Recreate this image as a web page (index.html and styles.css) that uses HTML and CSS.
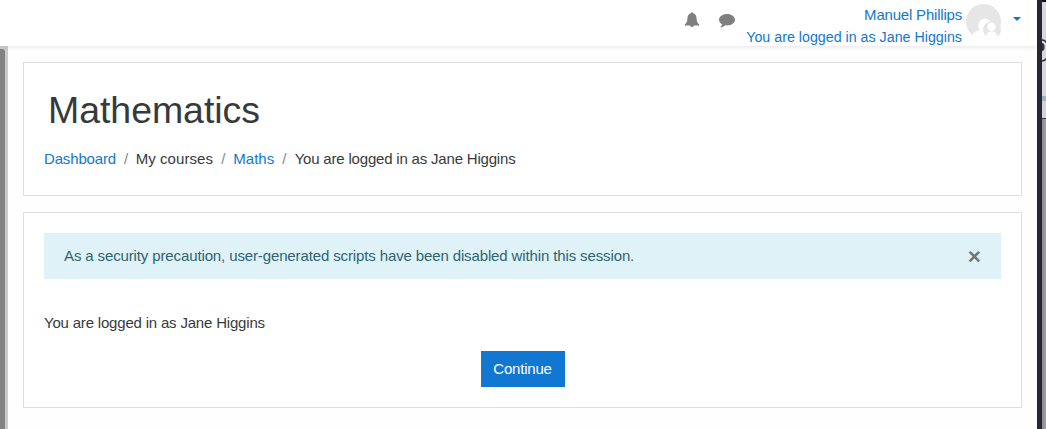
FILE: index.html
```html
<!DOCTYPE html>
<html lang="en">
<head>
<meta charset="utf-8">
<title>Mathematics</title>
<link rel="stylesheet" href="styles.css">
</head>
<body>
<div class="screen">
  <div class="window">
    <header class="navbar">
      <svg class="bell" viewBox="0 0 16 16" width="16" height="16"><path d="M8 0.2c.7 0 1 .4 1 1.100C11.300 1.800 12.400 3.600 12.500 6c.1 3.300.9 5 2.700 6.500v1.100H9.900A1.950 1.950 0 0 1 6.100 13.600H.8v-1.100C2.600 11 3.400 9.300 3.500 6 3.600 3.600 4.700 1.800 7 1.300c0-.7.3-1.100 1-1.100z"/></svg>
      <svg class="chat" viewBox="0 0 16 14" width="16" height="14"><path d="M8 0c4.400 0 8 2.600 8 5.700s-3.600 5.700-8 5.700c-.6 0-1.200 0-1.800-.1-1.200 1.100-2.600 1.900-4.400 2.100-.3 0-.5-.4-.2-.7.7-.7 1.200-1.300 1.500-2.500C1.200 9.200 0 7.600 0 5.700 0 2.600 3.600 0 8 0z"/></svg>
      <div class="user"><a class="name">Manuel Phillips</a><a class="role">You are logged in as Jane Higgins</a></div>
      <svg class="avatar" viewBox="0 0 35 35" width="35" height="35">
        <defs>
          <clipPath id="face"><circle cx="17.500" cy="17.500" r="17.500"/></clipPath>
          <clipPath id="small-face"><circle cx="26" cy="26" r="9"/></clipPath>
        </defs>
        <g clip-path="url(#face)"><rect width="35" height="35" fill="#e6e6e6"/><circle cx="19" cy="21.500" r="6.800" fill="#fff"/><path d="M5 35c.5-5 4-8.500 10-9h20v9z" fill="#fff"/></g>
        <g clip-path="url(#small-face)"><rect x="17" y="17" width="18" height="18" fill="#e6e6e6"/><circle cx="25.500" cy="22.800" r="4.200" fill="#fff"/><path d="M19.500 36c0-6 2-8.500 6-8.500s6.500 2.500 6.500 8.500z" fill="#fff"/></g>
      </svg>
      <span class="caret"></span>
    </header>
    <div class="body">
      <div class="scroll"><div class="thumb"></div></div>
      <main class="content">
        <section class="card heading">
          <h1>Mathematics</h1>
          <nav class="crumbs"><a class="dash">Dashboard</a><i>/</i><span>My courses</span><i>/</i><a>Maths</a><i>/</i><span class="tight">You are logged in as Jane Higgins</span></nav>
        </section>
        <section class="card notice">
          <div class="alert"><span>As a security precaution, user-generated scripts have been disabled within this session.</span><button class="close">×</button></div>
          <p class="tight">You are logged in as Jane Higgins</p>
          <button class="continue">Continue</button>
        </section>
      </main>
    </div>
  </div>
  <aside class="behind">
    <div class="behind-top"><svg width="5" height="94" viewBox="0 0 5 94"><path d="M0 38q3 0 5 3M0 59q3 0 5-3" stroke="#333" stroke-width="1.500" fill="none"/><ellipse cx="0" cy="45" rx="2.500" ry="4" fill="#333"/></svg></div>
    <div class="behind-bar"></div>
    <div class="behind-tool"></div>
    <div class="behind-low"></div>
  </aside>
</div>
</body>
</html>
```
FILE: styles.css
```css
* { box-sizing: border-box; }
body { margin: 0; background: #fefefe; color: #373a3c; font: 15px/22.5px "Liberation Sans", Arial, sans-serif; }
a { color: #1177d1; }
.screen { display: flex; width: 1046px; height: 429px; overflow: hidden; }
.window { display: flex; flex-direction: column; width: 1037px; }
.navbar { display: flex; flex: none; height: 46px; justify-content: flex-end; background: #fff; padding: 4px 16px 0 0; position: relative; box-shadow: 0 2px 4px rgba(0,0,0,.08); }
.bell, .chat { fill: #7f7f7f; }
.bell { margin: 8px 19px 0 0; }
.chat { margin: 10px 11px 0 0; }
.user { display: flex; flex-direction: column; align-items: flex-end; margin-right: 4px; }
.user a { white-space: nowrap; }
.name { letter-spacing: -0.2px; }
.role { font-size: 14.250px; line-height: 20px; }
.tight { letter-spacing: -0.19px; }
.avatar { margin-right: 12px; }
.caret { width: 8px; height: 4px; margin-top: 13px; border: 4px solid transparent; border-top-color: #1177d1; border-bottom: 0; }
.body { display: flex; flex: 1; }
.scroll { width: 8px; background: #cbcbcb; padding-top: 3px; }
.thumb { width: 5px; height: 100%; background: #7f8383; border-top-right-radius: 3px; }
.content { flex: 1; padding: 16px 15px 0; }
.card { border: 1px solid #dedede; background: #fff; padding: 20px; }
.heading { height: 134px; margin-bottom: 16px; }
h1 { font-size: 37.500px; font-weight: 400; line-height: 41px; letter-spacing: -0.06px; margin: 7px 0 17px 4px; }
.crumbs { display: flex; }
.crumbs i { font-style: normal; color: #818a91; padding: 0 8px; }
.dash { letter-spacing: -0.16px; }
.crumbs span:not(.tight) { letter-spacing: 0.08px; }
.crumbs .dash + i { padding-right: 7.5px; }
.crumbs .tight { margin-left: 0.3px; }
.notice { height: 196px; }
.alert { display: flex; justify-content: space-between; height: 46px; padding: 12px 20px; background: #def2f8; color: #2f6473; letter-spacing: -0.125px; }
.close { border: 0; padding: 0; background: none; color: #6f797c; font: 700 22.500px/23.5px "Liberation Sans", Arial, sans-serif; }
p { margin: 33px 0 16px; }
.continue { display: block; width: 84px; height: 36px; margin: 0 auto; padding: 0; border: 0; background: #1177d1; color: #fff; font: 15px/36px "Liberation Sans", Arial, sans-serif; letter-spacing: -0.2px; }
.behind { width: 9px; border-left: 5px solid #252834; display: flex; flex-direction: column; }
.behind-top { height: 96px; background: #d8d8d8; border-top: 2px solid #111; }
.behind-top svg { display: block; }
.behind-bar { height: 5px; background: #9cb2ca; }
.behind-tool { height: 18px; background: #d3d3d3; border-bottom: 1px solid #333; }
.behind-low { flex: 1; background: linear-gradient(90deg, #8b8b90, #a2a2a6); }
```
